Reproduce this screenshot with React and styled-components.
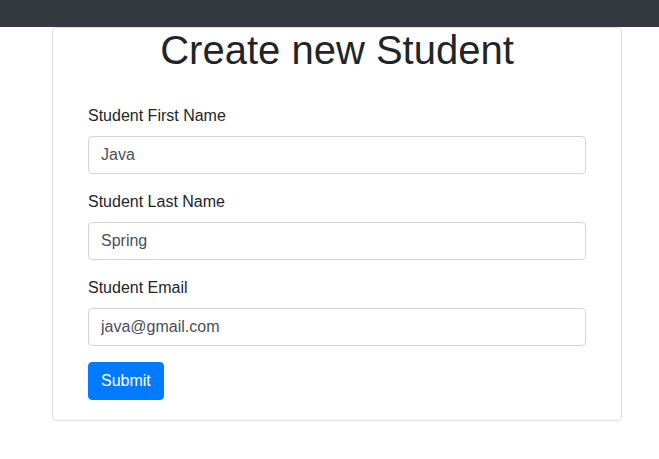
import React from "react";
import styled, { createGlobalStyle } from "styled-components";

const Global = createGlobalStyle`
  body {
    margin: 0;
    background: #fff;
    font-family: "Liberation Sans", Arial, sans-serif;
    color: #212529;
    font-size: 16px;
    line-height: 1.5;
  }
  * { box-sizing: border-box; }
`;

const Navbar = styled.nav`
  height: 27px;
  background: #343a40;
`;

const Card = styled.div`
  margin-left: 52px;
  width: 570px;
  border: 1px solid rgba(0, 0, 0, 0.125);
  border-radius: 4px;
  padding: 0 35px 20px 35px;
`;

const Title = styled.h1`
  margin: 0 0 32px 0;
  font-size: 40px;
  font-weight: 400;
  line-height: 44px;
  text-align: center;
`;

const Form = styled.form`
  display: flex;
  flex-direction: column;
`;

const Group = styled.div`
  display: flex;
  flex-direction: column;
  margin-bottom: 16px;
`;

const Label = styled.label`
  display: block;
  margin-bottom: 8px;
  line-height: 24px;
`;

const Input = styled.input`
  display: block;
  width: 100%;
  height: 38px;
  padding: 6px 12px;
  font-family: inherit;
  font-size: 16px;
  line-height: 24px;
  color: #495057;
  background: #fff;
  border: 1px solid #ced4da;
  border-radius: 4px;
  outline: none;
`;

const Button = styled.button`
  align-self: flex-start;
  height: 38px;
  padding: 6px 12px;
  font-family: inherit;
  font-size: 16px;
  line-height: 24px;
  color: #fff;
  background: #007bff;
  border: 1px solid #007bff;
  border-radius: 4px;
`;

const fields = [
  { label: "Student First Name", value: "Java" },
  { label: "Student Last Name", value: "Spring" },
  { label: "Student Email", value: "java@gmail.com" },
];

export default function App() {
  return (
    <>
      <Global />
      <Navbar />
      <Card>
        <Title>Create new Student</Title>
        <Form onSubmit={(e) => e.preventDefault()}>
          {fields.map((f) => (
            <Group key={f.label}>
              <Label>{f.label}</Label>
              <Input defaultValue={f.value} />
            </Group>
          ))}
          <Button type="submit">Submit</Button>
        </Form>
      </Card>
    </>
  );
}
